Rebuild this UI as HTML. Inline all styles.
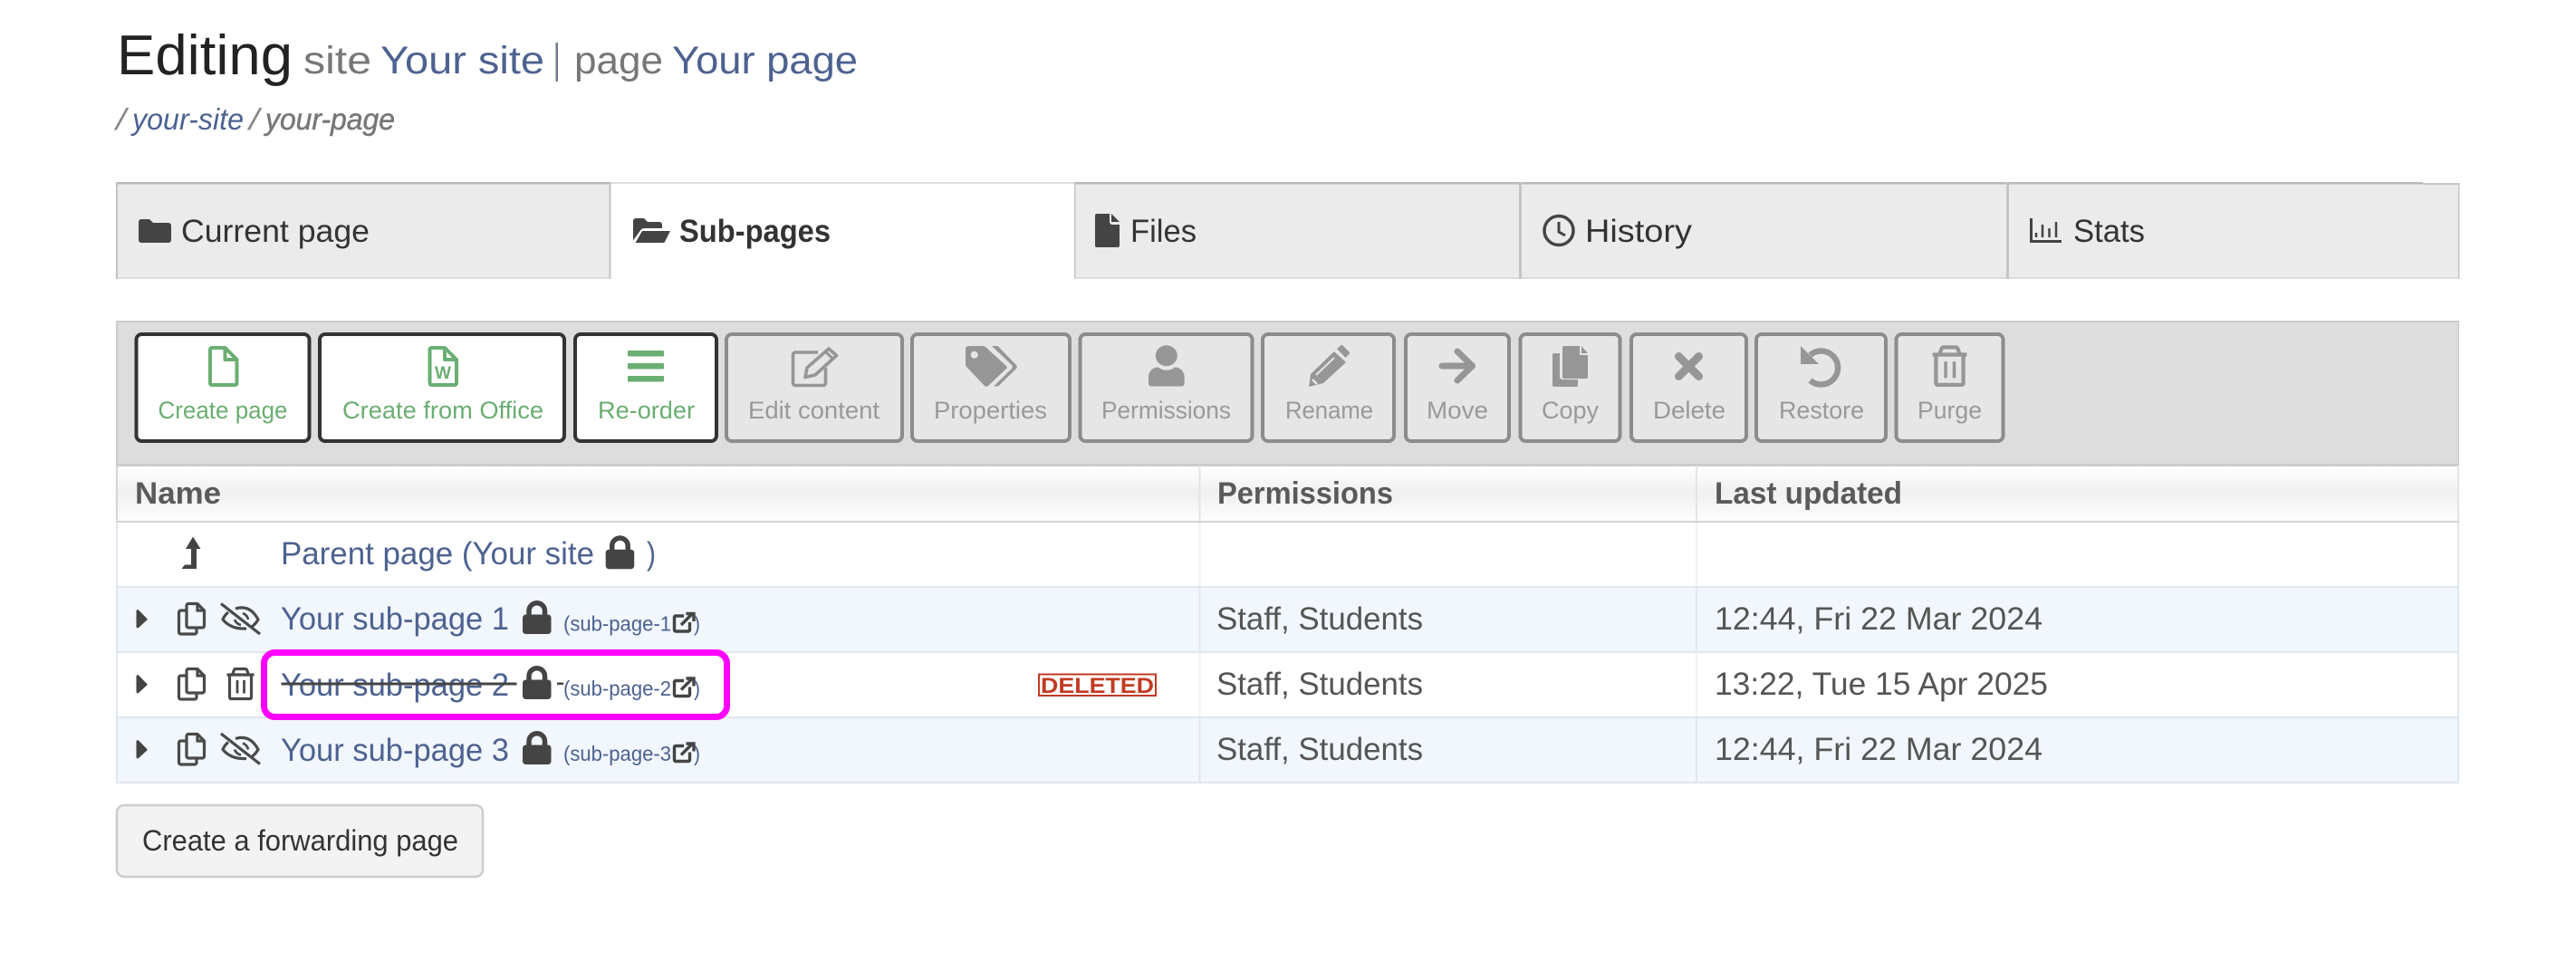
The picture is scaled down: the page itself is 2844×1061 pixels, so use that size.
<!DOCTYPE html>
<html lang="en">
<head>
<meta charset="utf-8">
<title>Editing site Your site | page Your page</title>
<style>
html,body{margin:0;padding:0;background:#fff;}
svg{display:block;}
text{font-family:"Liberation Sans",sans-serif;white-space:pre;}
.h{fill:#222;font-size:62px;}
.s{font-size:43px;}
.g{fill:#777;}
.bl{fill:#4d6290;}
.i{font-size:33px;font-style:italic;}
.t{fill:#333;font-size:35px;}
.lg{font-size:26.5px;fill:#6bae73;}
.ld{font-size:26.5px;fill:#999;}
.th{font-size:34px;font-weight:bold;fill:#5a5a5a;}
.td{font-size:35px;fill:#555;}
.ln{font-size:35px;fill:#4d6290;}
.sm{font-size:23px;fill:#4d6290;}
</style>
</head>
<body>
<svg xmlns="http://www.w3.org/2000/svg" width="2844" height="1061" viewBox="0 0 2844 1061">
<defs>
<linearGradient id="hg" x1="0" y1="0" x2="0" y2="1">
<stop offset="0" stop-color="#fff"/><stop offset=".48" stop-color="#f0f0f0"/><stop offset="1" stop-color="#fdfdfd"/>
</linearGradient>
</defs>
<rect width="2844" height="1061" fill="#fff"/>

<!-- Heading -->
<text class="h" x="129" y="82" textLength="194" lengthAdjust="spacingAndGlyphs">Editing</text>
<text class="s g" x="335" y="81" textLength="75" lengthAdjust="spacingAndGlyphs">site</text>
<text class="s bl" x="420" y="81" textLength="181" lengthAdjust="spacingAndGlyphs">Your site</text>
<rect x="613.500" y="47" width="2.500" height="43" fill="#6d7b8f"/>
<text class="s g" x="634" y="81" textLength="98" lengthAdjust="spacingAndGlyphs">page</text>
<text class="s bl" x="742" y="81" textLength="205" lengthAdjust="spacingAndGlyphs">Your page</text>

<text class="i" fill="#888" x="128" y="143" textLength="11" lengthAdjust="spacingAndGlyphs">/</text>
<text class="i bl" x="146" y="143" textLength="123" lengthAdjust="spacingAndGlyphs">your-site</text>
<text class="i" fill="#888" x="275" y="143" textLength="11" lengthAdjust="spacingAndGlyphs">/</text>
<text class="i" fill="#777" stroke="#777" stroke-width=".5" x="293" y="143" textLength="143" lengthAdjust="spacingAndGlyphs">your-page</text>

<!-- Tabs -->
<rect x="128" y="201" width="546" height="107" fill="#ebebeb"/>
<rect x="1186" y="201" width="1489" height="107" fill="#ebebeb"/>
<rect x="2675" y="203" width="40" height="105" fill="#ebebeb"/>
<rect x="128" y="201" width="546" height="2.500" fill="#b9b9b9"/>
<rect x="674" y="201" width="512" height="2" fill="#ddd"/>
<rect x="1186" y="201" width="1489" height="2.500" fill="#b9b9b9"/>
<rect x="2675" y="202" width="40" height="2" fill="#c4c4c4"/>
<rect x="128" y="306" width="546" height="2" fill="#ddd"/>
<rect x="1186" y="306" width="1529" height="2" fill="#ddd"/>
<rect x="128" y="201" width="2" height="107" fill="#c4c4c4"/>
<rect x="672.500" y="201" width="2" height="107" fill="#c4c4c4"/>
<rect x="1186" y="201" width="1.500" height="107" fill="#c4c4c4"/>
<rect x="1677" y="201" width="3" height="107" fill="#c4c4c4"/>
<rect x="2215" y="201" width="3" height="107" fill="#c4c4c4"/>
<rect x="2714" y="202" width="1.500" height="106" fill="#c4c4c4"/>

<path d="M153 245a3 3 0 0 1 3-3h9l4 4h17a3 3 0 0 1 3 3v16a3 3 0 0 1-3 3h-30a3 3 0 0 1-3-3z" fill="#444"/>
<text class="t" x="200" y="267" textLength="208" lengthAdjust="spacingAndGlyphs">Current page</text>

<path d="M699 244a3 3 0 0 1 3-3h9l4 4h13a3 3 0 0 1 3 3v4h-20a5 5 0 0 0-4 2.500l-8 11z" fill="#444"/>
<path d="M709 255h31l-5.500 11a3 3 0 0 1-3 2h-30z" fill="#444"/>
<text class="t" style="font-weight:bold" x="750" y="267" textLength="167" lengthAdjust="spacingAndGlyphs">Sub-pages</text>

<path d="M1209 238a2 2 0 0 1 2-2h14v9a3 3 0 0 0 3 3h8v23a2 2 0 0 1-2 2h-23a2 2 0 0 1-2-2z" fill="#444"/>
<path d="M1227 236l9 9h-9z" fill="#444"/>
<text class="t" x="1248" y="267" textLength="73" lengthAdjust="spacingAndGlyphs">Files</text>

<circle cx="1721" cy="254.500" r="16" fill="none" stroke="#444" stroke-width="3.500"/>
<path d="M1721 245v11l7 4" fill="none" stroke="#444" stroke-width="3"/>
<text class="t" x="1750" y="267" textLength="118" lengthAdjust="spacingAndGlyphs">History</text>

<path d="M2242.500 241v25.500H2276" fill="none" stroke="#444" stroke-width="3"/>
<path d="M2248 257v5M2255 248v14M2262.500 252v10M2270 245v17" fill="none" stroke="#444" stroke-width="2.500"/>
<text class="t" x="2289" y="267" textLength="79" lengthAdjust="spacingAndGlyphs">Stats</text>

<!-- Toolbar -->
<rect x="128" y="354" width="2587" height="160" fill="#ddd"/>
<rect x="128" y="354" width="2587" height="2" fill="#ccc"/>
<rect x="128" y="354" width="2" height="160" fill="#ccc"/>
<rect x="2713.500" y="354" width="1.500" height="160" fill="#ccc"/>
<rect x="128" y="512" width="2587" height="3" fill="#ccc"/>

<!-- enabled buttons -->
<g fill="#fff" stroke="#333" stroke-width="4">
<rect x="150.500" y="369" width="191" height="118" rx="6"/>
<rect x="353" y="369" width="270" height="118" rx="6"/>
<rect x="635" y="369" width="156" height="118" rx="6"/>
</g>
<!-- disabled buttons -->
<g fill="#e6e6e6" stroke="#8c8c8c" stroke-width="4">
<rect x="802" y="369" width="194" height="118" rx="6"/>
<rect x="1007" y="369" width="174" height="118" rx="6"/>
<rect x="1192.500" y="369" width="190" height="118" rx="6"/>
<rect x="1394" y="369" width="145" height="118" rx="6"/>
<rect x="1552" y="369" width="114" height="118" rx="6"/>
<rect x="1678.500" y="369" width="110" height="118" rx="6"/>
<rect x="1801" y="369" width="127" height="118" rx="6"/>
<rect x="1939" y="369" width="143" height="118" rx="6"/>
<rect x="2093.500" y="369" width="118" height="118" rx="6"/>
</g>

<!-- green icons -->
<g fill="none" stroke="#6bae73" stroke-width="4" stroke-linejoin="round">
<path d="M232 386a2 2 0 0 1 2-2h14.500L261.500 397v26a2 2 0 0 1-2 2H234a2 2 0 0 1-2-2z"/>
<path d="M248.500 384v13h13"/>
<path d="M474.500 386a2 2 0 0 1 2-2h14.500L504 397v26a2 2 0 0 1-2 2h-25.500a2 2 0 0 1-2-2z"/>
<path d="M491 384v13h13"/>
</g>
<text x="480" y="418" style="font-size:19px;font-weight:bold" fill="#6bae73" textLength="18" lengthAdjust="spacingAndGlyphs">W</text>
<g fill="#6bae73">
<rect x="693" y="387" width="40" height="6.500" rx="1"/>
<rect x="693" y="401" width="40" height="6.500" rx="1"/>
<rect x="693" y="415" width="40" height="6.500" rx="1"/>
</g>
<text class="lg" x="174.500" y="462" textLength="143" lengthAdjust="spacingAndGlyphs">Create page</text>
<text class="lg" x="378" y="462" textLength="222" lengthAdjust="spacingAndGlyphs">Create from Office</text>
<text class="lg" x="660" y="462" textLength="107" lengthAdjust="spacingAndGlyphs">Re-order</text>

<!-- grey icons -->
<!-- edit -->
<path d="M903 389H878a2.500 2.500 0 0 0-2.500 2.500V423a2.500 2.500 0 0 0 2.500 2.500h31a2.500 2.500 0 0 0 2.500-2.500V406" fill="none" stroke="#969696" stroke-width="3.600"/>
<path d="M891 406L915 385l8.500 7.500L900 414l-11 2.500z" fill="#e6e6e6" stroke="#969696" stroke-width="3.600" stroke-linejoin="round"/>
<path d="M911.500 388.500l8.500 8" stroke="#969696" stroke-width="3" fill="none"/>
<!-- tags -->
<path d="M1066 385a3 3 0 0 1 3-3h16a4 4 0 0 1 3 1l23 21a2 2 0 0 1 0 3l-20 19a3 3 0 0 1-4 0l-20-21a3 3 0 0 1-1-2z" fill="#969696"/>
<circle cx="1075.700" cy="391.700" r="4" fill="#e6e6e6"/>
<path d="M1095 382h6.500l20.500 21a3 3 0 0 1 0 4l-20 19.500h-5l20-19.500a3 3 0 0 0 0-4z" fill="#969696"/>
<!-- person -->
<ellipse cx="1287.800" cy="392.800" rx="12" ry="11.500" fill="#969696"/>
<path d="M1268 423v-7c0-6 5-11 11-10.500 3 2.500 5.500 3.200 8.800 3.200s6-.7 8.800-3.200c6-.5 11 4.500 11 10.500v7a3 3 0 0 1-3 3.500h-33.600a3 3 0 0 1-3-3.500z" fill="#969696"/>
<!-- pencil -->
<path d="M1447 413l26-25 13 12-25 23-16 4z" fill="#969696"/>
<path d="M1476 385l4-3.500a2 2 0 0 1 2.500 0l7 7a2 2 0 0 1 0 2.500l-4 4z" fill="#969696"/>
<path d="M1453 414l20-19" stroke="#e6e6e6" stroke-width="2" fill="none"/>
<path d="M1449 419l5 5" stroke="#e6e6e6" stroke-width="2.500" fill="none"/>
<!-- move -->
<path d="M1592 404h33M1609 388l16.500 16-16.500 16" fill="none" stroke="#969696" stroke-width="7" stroke-linecap="round" stroke-linejoin="round"/>
<!-- copy solid -->
<path d="M1714 392a2 2 0 0 1 2-2h6v26a3 3 0 0 0 3 3h17v6a2 2 0 0 1-2 2h-24a2 2 0 0 1-2-2z" fill="#969696"/>
<path d="M1725 384a2 2 0 0 1 2-2h17v10h9v24a2 2 0 0 1-2 2h-24a2 2 0 0 1-2-2z" fill="#969696"/>
<path d="M1746 382l7 8h-7z" fill="#969696"/>
<!-- x -->
<path d="M1853.500 393.500l22 22M1875.500 393.500l-22 22" fill="none" stroke="#969696" stroke-width="9" stroke-linecap="round"/>
<!-- restore -->
<path d="M1998.500 392A18.500 18.500 0 1 1 1998.500 420" fill="none" stroke="#969696" stroke-width="6.500"/>
<path d="M1988 382v20h20z" fill="#969696"/>
<!-- purge -->
<g transform="translate(2133 381.500) scale(1.258)">
<path d="M.5 8h30M6.500 8l2-5.500a2 2 0 0 1 2-1h10a2 2 0 0 1 2 1l2 5.500M3.500 8v25a1.500 1.500 0 0 0 1.500 1.500h21a1.500 1.500 0 0 0 1.500-1.500V8" fill="none" stroke="#969696" stroke-width="3.400"/>
<path d="M12 14v14.500M19.500 14v14.500" fill="none" stroke="#969696" stroke-width="2.800"/>
</g>

<text class="ld" x="826" y="462" textLength="145" lengthAdjust="spacingAndGlyphs">Edit content</text>
<text class="ld" x="1031" y="462" textLength="125" lengthAdjust="spacingAndGlyphs">Properties</text>
<text class="ld" x="1216" y="462" textLength="143" lengthAdjust="spacingAndGlyphs">Permissions</text>
<text class="ld" x="1419" y="462" textLength="97" lengthAdjust="spacingAndGlyphs">Rename</text>
<text class="ld" x="1575" y="462" textLength="68" lengthAdjust="spacingAndGlyphs">Move</text>
<text class="ld" x="1702" y="462" textLength="63" lengthAdjust="spacingAndGlyphs">Copy</text>
<text class="ld" x="1825" y="462" textLength="80" lengthAdjust="spacingAndGlyphs">Delete</text>
<text class="ld" x="1964" y="462" textLength="94" lengthAdjust="spacingAndGlyphs">Restore</text>
<text class="ld" x="2117" y="462" textLength="71" lengthAdjust="spacingAndGlyphs">Purge</text>

<!-- Table -->
<rect x="130" y="515" width="2583" height="60" fill="url(#hg)"/>
<rect x="130" y="649" width="2583" height="70" fill="#f2f6fd"/>
<rect x="130" y="793" width="2583" height="70" fill="#f2f6fd"/>
<rect x="128" y="514" width="2" height="63" fill="#d4d4d4"/>
<rect x="128" y="577" width="2" height="288" fill="#e1e6ee"/>
<rect x="2713" y="514" width="2" height="63" fill="#e4e4e4"/>
<rect x="2713" y="577" width="2" height="288" fill="#e1e6ee"/>
<rect x="1323.500" y="514" width="2" height="62" fill="#e4e4e4"/>
<rect x="1872" y="514" width="2" height="62" fill="#e4e4e4"/>
<rect x="1323.500" y="577" width="2" height="71" fill="#f2f2f2"/>
<rect x="1872" y="577" width="2" height="71" fill="#f2f2f2"/>
<rect x="1323.500" y="649" width="2" height="70" fill="#e1e6ee"/>
<rect x="1872" y="649" width="2" height="70" fill="#e1e6ee"/>
<rect x="1323.500" y="721" width="2" height="70" fill="#f2f2f2"/>
<rect x="1872" y="721" width="2" height="70" fill="#f2f2f2"/>
<rect x="1323.500" y="793" width="2" height="70" fill="#e1e6ee"/>
<rect x="1872" y="793" width="2" height="70" fill="#e1e6ee"/>
<rect x="128" y="575" width="2587" height="2" fill="#d4d4d4"/>
<rect x="128" y="647" width="2587" height="2" fill="#e1e6ee"/>
<rect x="128" y="719" width="2587" height="2" fill="#e1e6ee"/>
<rect x="128" y="791" width="2587" height="2" fill="#e1e6ee"/>
<rect x="128" y="863" width="2587" height="2" fill="#e1e6ee"/>

<text class="th" x="149" y="556" textLength="95" lengthAdjust="spacingAndGlyphs">Name</text>
<text class="th" x="1344" y="556" textLength="194" lengthAdjust="spacingAndGlyphs">Permissions</text>
<text class="th" x="1893" y="556" textLength="207" lengthAdjust="spacingAndGlyphs">Last updated</text>

<!-- Parent row -->
<path d="M213 592.500L221.500 606H217V628H200.500L204 623.500H211V606H205z" fill="#444"/>
<text class="ln" x="310" y="623" textLength="346" lengthAdjust="spacingAndGlyphs">Parent page (Your site</text>
<g transform="translate(668.700 592.700)" fill="#444">
<rect x="0" y="14" width="31.500" height="21.500" rx="3.500"/>
<path d="M7 17v-7a8.700 8.700 0 0 1 17.500 0v7" fill="none" stroke="#444" stroke-width="5.500"/>
</g>
<text class="ln" x="714" y="623" textLength="10" lengthAdjust="spacingAndGlyphs">)</text>

<!-- Row 1 -->
<path d="M150.500 674.500a1.500 1.500 0 0 1 2.500-1L162.300 683a1 1 0 0 1 0 1.500L153 693a1.500 1.500 0 0 1-2.500-1z" fill="#444"/>
<g transform="translate(196 665)" fill="none" stroke="#4a4a4a" stroke-width="3.200">
<path d="M10 3.500a2 2 0 0 1 2-2h10L29.500 9v17a2 2 0 0 1-2 2H12a2 2 0 0 1-2-2z"/>
<path d="M22 1.500V9h7.500"/>
<path d="M10 9H3.500a2 2 0 0 0-2 2v22a2 2 0 0 0 2 2H19a2 2 0 0 0 2-2v-5"/>
</g>
<g fill="none" stroke="#4a4a4a">
<path d="M244 666.500L287 700" stroke-width="3.200"/>
<path d="M260 672Q276 667 285 684Q282 689 278 692" stroke-width="3.200"/>
<path d="M252 676Q248 679 246 684Q255 695 272 694" stroke-width="3.200"/>
<path d="M259 684Q261 689 266 690M268 677Q273 679 274 684" stroke-width="2.800"/>
</g>
<text class="ln" x="310" y="695" textLength="252" lengthAdjust="spacingAndGlyphs">Your sub-page 1</text>
<g transform="translate(577 664.500)" fill="#444">
<rect x="0" y="14" width="31.500" height="21.500" rx="3.500"/>
<path d="M7 17v-7a8.700 8.700 0 0 1 17.500 0v7" fill="none" stroke="#444" stroke-width="5.500"/>
</g>
<text class="sm" x="622" y="696.500" textLength="119" lengthAdjust="spacingAndGlyphs">(sub-page-1</text>
<g fill="none" stroke="#444">
<path d="M755 680H746a1.500 1.500 0 0 0-1.500 1.500V695.500a1.500 1.500 0 0 0 1.500 1.500h14a1.500 1.500 0 0 0 1.500-1.500V687" stroke-width="3.400"/>
<path d="M752 690l12-12M757.500 677.500h8.500V686" stroke-width="3.400"/>
</g>
<text class="sm" x="766" y="696.500" textLength="7" lengthAdjust="spacingAndGlyphs">)</text>
<text class="td" x="1343" y="695" textLength="228" lengthAdjust="spacingAndGlyphs">Staff, Students</text>
<text class="td" x="1893" y="695" textLength="362" lengthAdjust="spacingAndGlyphs">12:44, Fri 22 Mar 2024</text>

<!-- Row 2 -->
<path d="M150.500 746.500a1.500 1.500 0 0 1 2.500-1L162.300 755a1 1 0 0 1 0 1.500L153 765a1.500 1.500 0 0 1-2.500-1z" fill="#444"/>
<g transform="translate(196 737)" fill="none" stroke="#4a4a4a" stroke-width="3.200">
<path d="M10 3.500a2 2 0 0 1 2-2h10L29.500 9v17a2 2 0 0 1-2 2H12a2 2 0 0 1-2-2z"/>
<path d="M22 1.500V9h7.500"/>
<path d="M10 9H3.500a2 2 0 0 0-2 2v22a2 2 0 0 0 2 2H19a2 2 0 0 0 2-2v-5"/>
</g>
<g transform="translate(250 737)">
<path d="M.5 8h30M6.500 8l2-5.500a2 2 0 0 1 2-1h10a2 2 0 0 1 2 1l2 5.500M3.500 8v25a1.500 1.500 0 0 0 1.500 1.500h21a1.500 1.500 0 0 0 1.500-1.500V8" fill="none" stroke="#4a4a4a" stroke-width="3.200"/>
<path d="M12 14v14.500M19.500 14v14.500" fill="none" stroke="#4a4a4a" stroke-width="2.800"/>
</g>
<text class="ln" x="310" y="768" textLength="252" lengthAdjust="spacingAndGlyphs">Your sub-page 2</text>
<rect x="310.500" y="753.500" width="260" height="3" fill="#444"/>
<g transform="translate(577 736.500)" fill="#444">
<rect x="0" y="14" width="31.500" height="21.500" rx="3.500"/>
<path d="M7 17v-7a8.700 8.700 0 0 1 17.500 0v7" fill="none" stroke="#444" stroke-width="5.500"/>
</g>
<rect x="615" y="753.500" width="7" height="2.500" fill="#444"/>
<text class="sm" x="622" y="768" textLength="119" lengthAdjust="spacingAndGlyphs">(sub-page-2</text>
<g transform="translate(0 71.500)" fill="none" stroke="#444">
<path d="M755 680H746a1.500 1.500 0 0 0-1.500 1.500V695.500a1.500 1.500 0 0 0 1.500 1.500h14a1.500 1.500 0 0 0 1.500-1.500V687" stroke-width="3.400"/>
<path d="M752 690l12-12M757.500 677.500h8.500V686" stroke-width="3.400"/>
</g>
<text class="sm" x="766" y="768" textLength="7" lengthAdjust="spacingAndGlyphs">)</text>
<rect x="1146" y="743.500" width="131" height="25.500" fill="#c23b22"/>
<rect x="1148" y="745.500" width="127" height="21.500" fill="#fff"/>
<text x="1149" y="765" style="font-size:24px;font-weight:bold" fill="#c23b22" textLength="125" lengthAdjust="spacingAndGlyphs">DELETED</text>
<text class="td" x="1343" y="767" textLength="228" lengthAdjust="spacingAndGlyphs">Staff, Students</text>
<text class="td" x="1893" y="767" textLength="368" lengthAdjust="spacingAndGlyphs">13:22, Tue 15 Apr 2025</text>

<!-- Row 3 -->
<path d="M150.500 818.500a1.500 1.500 0 0 1 2.500-1L162.300 827a1 1 0 0 1 0 1.500L153 837a1.500 1.500 0 0 1-2.500-1z" fill="#444"/>
<g transform="translate(196 809)" fill="none" stroke="#4a4a4a" stroke-width="3.200">
<path d="M10 3.500a2 2 0 0 1 2-2h10L29.500 9v17a2 2 0 0 1-2 2H12a2 2 0 0 1-2-2z"/>
<path d="M22 1.500V9h7.500"/>
<path d="M10 9H3.500a2 2 0 0 0-2 2v22a2 2 0 0 0 2 2H19a2 2 0 0 0 2-2v-5"/>
</g>
<g fill="none" stroke="#4a4a4a" transform="translate(0 143.500)">
<path d="M244 666.500L287 700" stroke-width="3.200"/>
<path d="M260 672Q276 667 285 684Q282 689 278 692" stroke-width="3.200"/>
<path d="M252 676Q248 679 246 684Q255 695 272 694" stroke-width="3.200"/>
<path d="M259 684Q261 689 266 690M268 677Q273 679 274 684" stroke-width="2.800"/>
</g>
<text class="ln" x="310" y="840" textLength="252" lengthAdjust="spacingAndGlyphs">Your sub-page 3</text>
<g transform="translate(577 808.500)" fill="#444">
<rect x="0" y="14" width="31.500" height="21.500" rx="3.500"/>
<path d="M7 17v-7a8.700 8.700 0 0 1 17.500 0v7" fill="none" stroke="#444" stroke-width="5.500"/>
</g>
<text class="sm" x="622" y="840" textLength="119" lengthAdjust="spacingAndGlyphs">(sub-page-3</text>
<g transform="translate(0 143.500)" fill="none" stroke="#444">
<path d="M755 680H746a1.500 1.500 0 0 0-1.500 1.500V695.500a1.500 1.500 0 0 0 1.500 1.500h14a1.500 1.500 0 0 0 1.500-1.500V687" stroke-width="3.400"/>
<path d="M752 690l12-12M757.500 677.500h8.500V686" stroke-width="3.400"/>
</g>
<text class="sm" x="766" y="840" textLength="7" lengthAdjust="spacingAndGlyphs">)</text>
<text class="td" x="1343" y="839" textLength="228" lengthAdjust="spacingAndGlyphs">Staff, Students</text>
<text class="td" x="1893" y="839" textLength="362" lengthAdjust="spacingAndGlyphs">12:44, Fri 22 Mar 2024</text>

<!-- Highlight -->
<rect x="291.500" y="720.500" width="511" height="71" rx="12" fill="none" stroke="#ff00ff" stroke-width="7"/>

<!-- Forwarding button -->
<rect x="129" y="889" width="404" height="79" rx="8" fill="#f3f3f3" stroke="#ccc" stroke-width="2.500"/>
<text x="157" y="939" style="font-size:32px" fill="#333" textLength="349" lengthAdjust="spacingAndGlyphs">Create a forwarding page</text>
</svg>
</body>
</html>
